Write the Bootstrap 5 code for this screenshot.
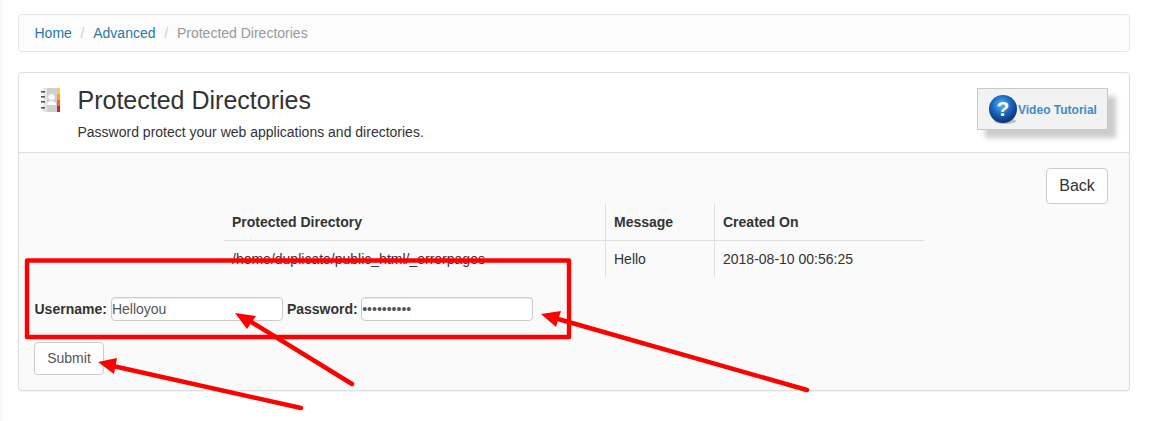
<!DOCTYPE html>
<html lang="en">
<head>
<meta charset="utf-8">
<title>Protected Directories</title>
<link href="https://cdn.jsdelivr.net/npm/bootstrap@5.3.0/dist/css/bootstrap.min.css" rel="stylesheet">
<style>
html,body{height:421px;overflow:hidden}
body{font-family:"Liberation Sans",Arial,sans-serif;font-size:14px;color:#333;background:#fff;line-height:20px}
.shell{height:421px;border-left:3px solid #f8f8f8;padding:14px 24px 0 15px;position:relative}
.crumbs{--bs-breadcrumb-item-padding-x:8.750px;height:38px;background:#fcfcfc;border:1px solid #e7e7e7;border-radius:4px;padding:8px 15.500px;margin:0 0 20px}
.crumbs .breadcrumb-item{font-size:14px;line-height:20px}
.crumbs a{color:#2a78a8;text-decoration:none}
.crumbs .active{color:#999}
.crumbs .breadcrumb-item+.breadcrumb-item::before{color:#ccc}
.panel{height:319px;border:1px solid #ddd;border-radius:4px;background:#fafafa;box-shadow:0 1px 1px rgba(0,0,0,.05)}
.panel-top{height:80px;background:#fff;border-bottom:1px solid #ddd;padding:14px 21px 0 22px;border-radius:4px 4px 0 0}
.pic-col{width:36.500px;padding-top:1px}
.page-title{font-size:25px;line-height:28px;font-weight:400;margin:0 0 8px;color:#333;position:relative;top:-1px}
.page-sub{font-size:14px;line-height:20px;margin:0;color:#333;position:relative;top:-1px}
.vt-box{width:131px;height:42px;margin-top:1px;background:#f2f2f2;border:1px solid #c8c8c8;box-shadow:8px 8px 5px #ccc;padding:1px 0 0 11px;gap:1px;text-decoration:none;font-size:12px;font-weight:700;color:#428bca}
.panel-main{padding:15px 15px 0 15px}
.back-row{padding-right:6px}
.back-btn{font-size:16px;line-height:22px;width:62px;height:36px;padding:6px 0;background:#fff;border:1px solid #ccc;border-radius:4px;color:#333}
.dir-table{width:700px;margin:0 auto;border-collapse:collapse;background:transparent;font-size:14px}
.dir-table th,.dir-table td{padding:8px;line-height:20px;height:36px;background:transparent;color:#333;border:0}
.dir-table th{border-bottom:1px solid #ddd}
.dir-table .sep{border-left:1px solid #ddd;padding-left:8.500px}
.c1{width:381px}.c2{width:109px}
.creds{margin-top:20px;padding-left:.5px;height:24px}
.creds label{font-weight:700;margin:0;font-size:14px;color:#333}
.field{width:172px;height:24px;padding:0;border:1px solid #ccc;border-radius:4px;font-size:14px;color:#555;background:#fff;box-shadow:inset 0 1px 1px rgba(0,0,0,.075);font-family:"Liberation Sans",Arial,sans-serif;outline:0}
.pw-field{margin-left:3.500px}
.send-btn{margin-top:21px;width:70px;height:33px;padding:0;font-size:14px;background:#fff;border:1px solid #ccc;border-radius:4px;color:#555}
.marks{position:absolute;left:-3px;top:0;pointer-events:none}
</style>
</head>
<body>
<div class="shell">
  <ol class="breadcrumb crumbs">
    <li class="breadcrumb-item"><a href="#">Home</a></li>
    <li class="breadcrumb-item"><a href="#">Advanced</a></li>
    <li class="breadcrumb-item active">Protected Directories</li>
  </ol>
  <div class="panel">
    <div class="panel-top d-flex justify-content-between align-items-start">
      <div class="d-flex">
        <div class="pic-col">
          <svg width="20" height="24" viewBox="0 0 20 24">
            <rect x="2" y="0" width="15" height="24" fill="#d0d0d0"/>
            <rect x="2" y="0" width="4" height="24" fill="#e6e6e6"/>
            <rect x="16" y="0" width="3" height="6" fill="#fbd13c"/>
            <rect x="16" y="6" width="3" height="6" fill="#f9a825"/>
            <rect x="16" y="12" width="3" height="6" fill="#f0642d"/>
            <rect x="16" y="18" width="3" height="6" fill="#d81e25"/>
            <circle cx="10.500" cy="9" r="3" fill="#fff"/>
            <path d="M6 17c0-3 2-4 4.500-4s4.500 1 4.500 4z" fill="#fff"/>
            <g fill="#555"><rect x="0" y="3" width="4" height="1.600"/><rect x="0" y="8" width="4" height="1.600"/><rect x="0" y="13" width="4" height="1.600"/><rect x="0" y="19" width="4" height="1.600"/></g>
          </svg>
        </div>
        <div>
          <h1 class="page-title">Protected Directories</h1>
          <p class="page-sub">Password protect your web applications and directories.</p>
        </div>
      </div>
      <a href="#" class="vt-box d-flex align-items-center">
        <svg width="28" height="30" viewBox="0 0 28 30" class="flex-shrink-0">
          <defs><radialGradient id="orb" cx="45%" cy="35%" r="65%"><stop offset="0" stop-color="#5cb6ee"/><stop offset=".55" stop-color="#1763bd"/><stop offset="1" stop-color="#0b2f73"/></radialGradient></defs>
          <ellipse cx="16" cy="26" rx="11" ry="3" fill="#999" opacity=".6"/>
          <circle cx="14" cy="14" r="14" fill="url(#orb)"/>
          <text x="14" y="21" text-anchor="middle" font-family="Liberation Sans" font-weight="700" font-size="21" fill="#fff">?</text>
        </svg>
        Video Tutorial
      </a>
    </div>
    <div class="panel-main">
      <div class="d-flex justify-content-end back-row"><button type="button" class="btn back-btn">Back</button></div>
      <table class="dir-table">
        <thead>
          <tr><th class="c1">Protected Directory</th><th class="c2 sep">Message</th><th class="sep">Created On</th></tr>
        </thead>
        <tbody>
          <tr><td>/home/duplicate/public_html/_errorpages</td><td class="sep">Hello</td><td class="sep">2018-08-10 00:56:25</td></tr>
        </tbody>
      </table>
      <form>
        <div class="creds d-flex align-items-center">
          <label for="u">Username:</label>
          <input id="u" class="field ms-1" type="text" value="Helloyou">
          <label for="p" class="ms-1">Password:</label>
          <input id="p" class="field pw-field" type="password" value="helloyou12">
        </div>
        <button type="button" class="btn send-btn d-block">Submit</button>
      </form>
    </div>
  </div>
  <svg class="marks" width="1154" height="421" viewBox="0 0 1154 421">
    <rect x="27" y="260.500" width="542" height="76.500" fill="none" stroke="#f00" stroke-width="4.400" stroke-linejoin="round"/>
    <g stroke="#f00" stroke-width="4.500" stroke-linecap="round">
      <line x1="352" y1="384" x2="248" y2="320"/>
      <line x1="301" y1="408" x2="113" y2="366"/>
      <line x1="807" y1="390" x2="558" y2="319"/>
    </g>
    <g fill="#f00">
      <polygon points="235,313 256,316 247,329"/>
      <polygon points="98,362 117,358 114,374"/>
      <polygon points="541,314 561,311 556,327"/>
    </g>
  </svg>
</div>
</body>
</html>
